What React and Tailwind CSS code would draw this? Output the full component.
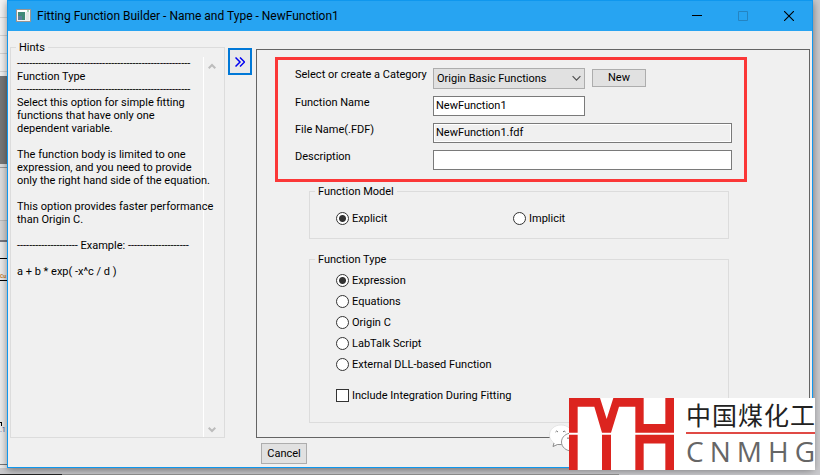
import { useState } from 'react';

const HINTS = [
  '-'.repeat(57),
  'Function Type',
  '-'.repeat(57),
  'Select this option for simple fitting',
  'functions that have only one',
  'dependent variable.',
  '',
  'The function body is limited to one',
  'expression, and you need to provide',
  'only the right hand side of the equation.',
  '',
  'This option provides faster performance',
  'than Origin C.',
  '',
  '-------------------- Example: --------------------',
  '',
  'a + b * exp( -x^c / d )',
];

const TYPES = ['Expression', 'Equations', 'Origin C', 'LabTalk Script', 'External DLL-based Function'];

function Radio({ name, label, checked, onChange }) {
  return (
    <label className="flex h-[13px] items-center gap-[3px]">
      <input
        type="radio"
        name={name}
        checked={checked}
        onChange={onChange}
        className="size-[13px] shrink-0 appearance-none rounded-full border border-[#333] bg-white checked:bg-[radial-gradient(circle,#333_3px,#fff_4px)]"
      />
      {label}
    </label>
  );
}

function Group({ title, className, children }) {
  return (
    <fieldset className={`min-w-0 border border-[#dcdcdc] ${className}`}>
      <legend className="ml-[5px] px-[3px] leading-[13px]">{title}</legend>
      {children}
    </fieldset>
  );
}

function TitleBar() {
  return (
    <header className="flex h-[30px] shrink-0 items-center bg-[#27a4f2]">
      <svg className="ml-2 size-4 shrink-0" viewBox="0 0 16 16" aria-hidden="true">
        <rect x="0.5" y="1.5" width="14" height="12" fill="#f4f4f4" stroke="#9c9590" />
        <rect x="1" y="2" width="13" height="2" fill="#fff" />
        <rect x="2" y="4" width="7" height="8" fill="#3f8a78" />
        <rect x="2" y="8" width="4" height="4" fill="#5b7f9e" />
        <rect x="10" y="4" width="3" height="8" fill="#e4e9e6" />
        <rect x="11" y="2.5" width="2" height="1" fill="#5cae78" />
      </svg>
      <h1 className="ml-[5px] flex-1 whitespace-nowrap text-[12px] leading-4">
        Fitting Function Builder - Name and Type - NewFunction1
      </h1>
      <button type="button" aria-label="Minimize" className="flex h-full w-[46px] items-center justify-center">
        <svg width="10" height="10" viewBox="0 0 10 10"><path d="M0 4.5h10" stroke="#000" /></svg>
      </button>
      <button type="button" aria-label="Maximize" disabled className="flex h-full w-[46px] items-center justify-center">
        <svg width="10" height="10" viewBox="0 0 10 10"><path d="M.5.5h9v9h-9z" fill="none" stroke="#2484c2" /></svg>
      </button>
      <button type="button" aria-label="Close" className="flex h-full w-[46px] items-center justify-center">
        <svg width="10" height="10" viewBox="0 0 10 10"><path d="M0 0l10 10M10 0L0 10" stroke="#000" strokeWidth="1.1" /></svg>
      </button>
    </header>
  );
}

function Hints() {
  return (
    <Group title="Hints" className="flex w-[215px] shrink-0 flex-col">
      <div className="flex flex-1 pt-[3px]">
        <div className="w-[193px] shrink-0 border-r border-white pl-1.5">
          {HINTS.map((line, i) => (
            <p key={i} className="h-[13px] whitespace-nowrap leading-[13px]">{line}</p>
          ))}
        </div>
        <div className="flex w-4 flex-col items-center justify-between pt-1.5 pb-1">
          <svg width="8" height="7" viewBox="0 0 8 7"><path d="M.7 5.3L4 2l3.3 3.3" fill="none" stroke="#bcbcbc" strokeWidth="2" /></svg>
          <svg width="8" height="7" viewBox="0 0 8 7"><path d="M.7 1.7L4 5l3.3-3.3" fill="none" stroke="#bcbcbc" strokeWidth="2" /></svg>
        </div>
      </div>
    </Group>
  );
}

function Details() {
  return (
    <section className="ml-[18px] mt-[7px] grid w-[472px] max-w-full grid-cols-[138px_1fr] gap-y-[7px] border-[3px] border-[#fb3737] pt-2 pr-3 pb-[9px] pl-[17px]">
      <label htmlFor="category" className="leading-[14px]">Select or create a Category</label>
      <div className="flex items-start gap-[7px]">
        <div className="relative h-[21px] w-[152px]">
          <select id="category" className="block h-full w-full appearance-none border border-[#adadad] bg-[#e1e1e1] px-[3px] leading-[13px]">
            <option>Origin Basic Functions</option>
          </select>
          <svg className="pointer-events-none absolute top-[7px] right-1" width="9" height="7" viewBox="0 0 9 7"><path d="M.6 1.2l3.9 3.9 3.9-3.9" fill="none" stroke="#505050" strokeWidth="1.2" /></svg>
        </div>
        <button type="button" className="mt-px h-[18px] w-[54px] border border-[#adadad] bg-[#e1e1e1] leading-[14px]">New</button>
      </div>
      <label htmlFor="fname" className="leading-[14px]">Function Name</label>
      <input id="fname" defaultValue="NewFunction1" className="h-5 w-[152px] border border-[#7a7a7a] bg-white px-0.5 pb-0.5" />
      <label htmlFor="file" className="leading-[14px]">File Name(.FDF)</label>
      <input id="file" readOnly value="NewFunction1.fdf" className="h-5 w-full border border-[#7a7a7a] bg-[#f0f0f0] px-0.5 pb-0.5 inset-ring inset-ring-white" />
      <label htmlFor="desc" className="leading-[14px]">Description</label>
      <input id="desc" defaultValue="" className="h-5 w-full border border-[#7a7a7a] bg-white px-0.5 pb-0.5" />
    </section>
  );
}

function Watermark() {
  return (
    <div className="absolute right-[5px] bottom-[5px] flex items-end">
      <svg className="-mr-6 mb-[18px]" width="44" height="28" viewBox="0 0 44 28" aria-hidden="true">
        <path d="M12 1C5.500 1 0.500 5.500 0.500 11c0 3.500 2 6 4.500 8l-1 3.500 4.500-2c8 2 15-2.500 15-9.500C23.500 5.500 18.500 1 12 1z" fill="#fff" stroke="#ddd" strokeWidth=".7" />
        <path d="M5 19l-1 3.500 4.500-2 4 0" fill="none" stroke="#777" strokeWidth=".8" />
        <path d="M23 9c-6 0-10.500 4-10.500 9s4.500 9 10.500 9 10-4 10-9-4-9-10-9z" fill="#fff" stroke="#777" strokeWidth=".8" />
        <path d="M6.500 8q1-2 2.500 0M14 8q1-2 2.500 0M18 14.500q1-1.500 2 0" fill="none" stroke="#777" />
      </svg>
      <div className="relative flex h-[72px] w-[246px] bg-white">
        <svg width="105" height="72" viewBox="87 54 315 215" preserveAspectRatio="none" fill="#dc241f" aria-hidden="true">
          <path d="M87 54H180L200 117L220 54H311V132H376V54H402V158H286V80H237L213 158H186L163 80H113V158H87z" />
          <path d="M87 164H113V269H87zM186 164H213V269H186zM286 164H402V269H376V190H311V269H286z" />
        </svg>
        <div className="ml-3 flex flex-1 flex-col">
          <p className="flex h-[34px] items-start justify-between font-['Noto_Sans_CJK_SC',sans-serif] text-[25px] leading-[32px] text-[#222]">
            {[...'中国煤化工'].map((c) => <span key={c}>{c}</span>)}
          </p>
          <div className="h-0.5 bg-[#e04a45]" />
          <p className="flex h-9 items-start justify-between font-['Open_Sans',sans-serif] text-[28px] leading-[34px] text-[#666]">
            {[...'CNMHG'].map((c) => <span key={c}>{c}</span>)}
          </p>
        </div>
      </div>
    </div>
  );
}

function DesktopEdge() {
  return (
    <div className="flex w-[7px] shrink-0 flex-col overflow-hidden bg-[#ececec]" aria-hidden="true">
      <div className="h-[76px] bg-[repeating-linear-gradient(#f3f3f3_0_17px,#d5d5d5_17px_18px)]" />
      <div className="h-[88px] bg-[#777]" />
      <div className="h-1 border-b border-[#999] bg-[#ddd]" />
      <div className="h-[53px] border-b border-[#bbb] bg-[#dedede]" />
      <div className="h-[21px] border-b-2 border-[#77777f] bg-[#d5d5d5]" />
      <div className="h-[17px] border-b border-black" />
      <div className="flex h-[22px] items-end border-b border-black text-[5px] font-bold leading-[8px] text-[#c17a2c]">Cu</div>
      <div className="h-[141px]" />
      <div className="h-1 w-0.5 border-t border-r border-black" />
      <div className="h-[39px] border-b border-[#777] text-[7px] leading-[8px] text-[#2d4fa0]">.1</div>
    </div>
  );
}

export default function App() {
  const [model, setModel] = useState('Explicit');
  const [type, setType] = useState('Expression');
  return (
    <div className="relative flex min-h-screen flex-col overflow-hidden bg-[#cacacd] font-[Roboto,'Liberation_Sans',sans-serif] text-[11px] leading-[13px] text-black">
      <div className="flex">
        <DesktopEdge />
        <main className="min-w-0 flex-1 border border-[#0f97ee] bg-[#f0f0f0] shadow-[0_2px_8px_rgba(0,0,0,0.45)]">
          <TitleBar />
          <div className="flex px-0.5 pt-2.5">
            <Hints />
            <button type="button" aria-label="Toggle hints" className="ml-[3px] mt-[7px] flex h-[27px] w-6 shrink-0 items-center justify-center border-2 border-[#0078d7] bg-[#e9e9e9]">
              <svg width="10" height="10" viewBox="0 0 10 10"><path d="M.5.5L5 5 .5 9.500M5 .5L9.500 5 5 9.500" fill="none" stroke="#0000f0" strokeWidth="1.5" /></svg>
            </button>
            <div className="ml-1 mt-2 min-w-0 flex-1 border border-[#646464] pb-3.5">
              <Details />
              <Group title="Function Model" className="ml-[52px] mt-[3px] w-[420px] max-w-full">
                <div className="grid grid-cols-[177px_1fr] pt-3.5 pb-[13px] pl-[26px]">
                  {['Explicit', 'Implicit'].map((m) => (
                    <Radio key={m} name="model" label={m} checked={model === m} onChange={() => setModel(m)} />
                  ))}
                </div>
              </Group>
              <Group title="Function Type" className="ml-[52px] mt-3.5 w-[420px] max-w-full">
                <div className="flex flex-col items-start gap-2 pt-2 pl-[26px]">
                  {TYPES.map((t) => (
                    <Radio key={t} name="type" label={t} checked={type === t} onChange={() => setType(t)} />
                  ))}
                </div>
                <label className="mt-[18px] mb-5 ml-[26px] flex h-[13px] items-center gap-[3px]">
                  <input type="checkbox" className="size-[13px] appearance-none border border-[#333] bg-white checked:bg-[#333]" />
                  Include Integration During Fitting
                </label>
              </Group>
            </div>
          </div>
          <footer className="pt-[5px] pb-[3px] pl-[253px]">
            <button type="button" className="block h-[21px] w-[46px] border border-[#adadad] bg-[#e1e1e1]">Cancel</button>
          </footer>
        </main>
        <div className="w-[7px] shrink-0" />
      </div>
      <div className="flex h-[7px] items-end" aria-hidden="true">
        <div className="h-px w-[62px] bg-[#222]" />
        <div className="h-px w-[557px] bg-[#888]" />
      </div>
      <Watermark />
    </div>
  );
}
